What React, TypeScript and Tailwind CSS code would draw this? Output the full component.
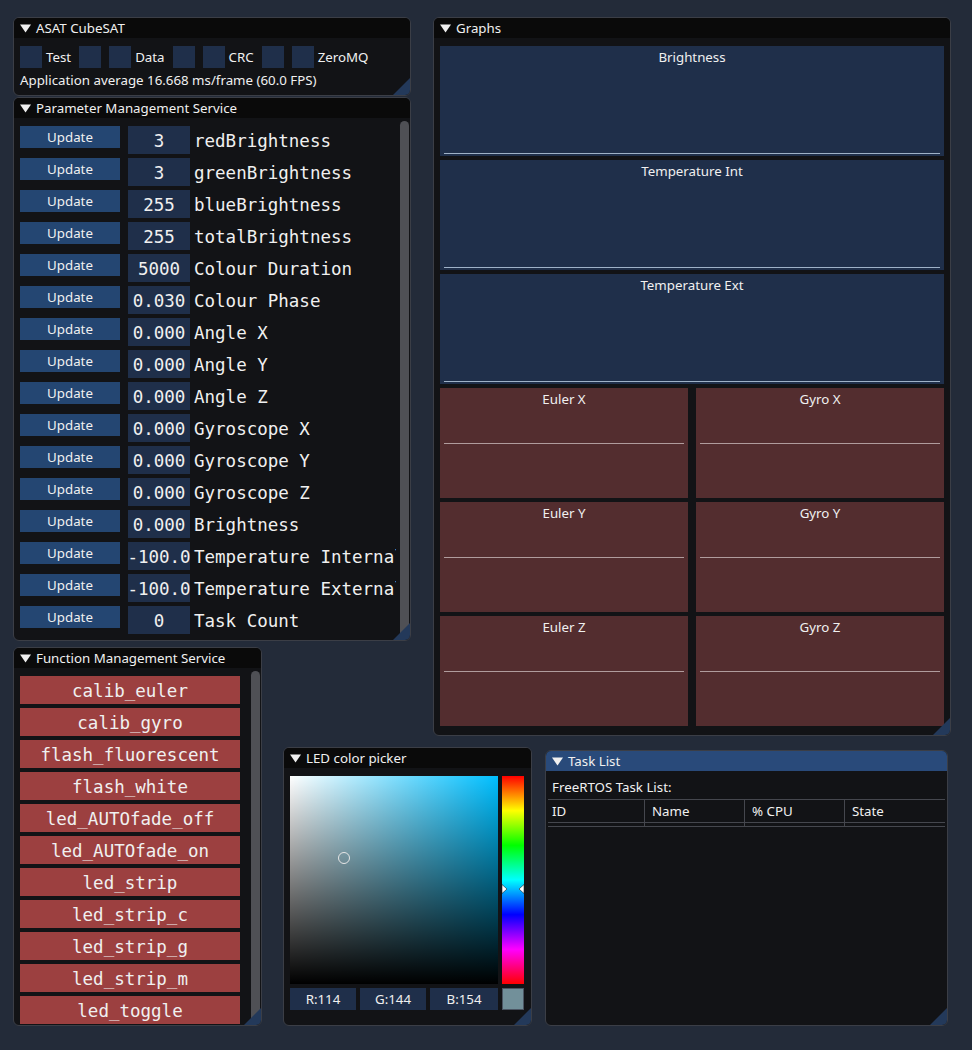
import type { ReactNode } from 'react';

// ─── Data ─────────────────────────────────────────────────────────────────────

const PARAMS: [string, string][] = [
  ['3', 'redBrightness'],
  ['3', 'greenBrightness'],
  ['255', 'blueBrightness'],
  ['255', 'totalBrightness'],
  ['5000', 'Colour Duration'],
  ['0.030', 'Colour Phase'],
  ['0.000', 'Angle X'],
  ['0.000', 'Angle Y'],
  ['0.000', 'Angle Z'],
  ['0.000', 'Gyroscope X'],
  ['0.000', 'Gyroscope Y'],
  ['0.000', 'Gyroscope Z'],
  ['0.000', 'Brightness'],
  ['-100.0', 'Temperature Internal'],
  ['-100.0', 'Temperature External'],
  ['0', 'Task Count'],
];

const FUNCTIONS = [
  'calib_euler',
  'calib_gyro',
  'flash_fluorescent',
  'flash_white',
  'led_AUTOfade_off',
  'led_AUTOfade_on',
  'led_strip',
  'led_strip_c',
  'led_strip_g',
  'led_strip_m',
  'led_toggle',
];

const MONO = "[font-family:'DejaVu_Sans_Mono',monospace] text-[17.5px] leading-[20px] pt-[2px]";

// ─── Window chrome ────────────────────────────────────────────────────────────

function Grip() {
  return (
    <div className="absolute right-0 bottom-0 h-[17px] w-[17px] bg-[#23395a] [clip-path:polygon(100%_0,100%_100%,0_100%)]" />
  );
}

function Window({
  title,
  className,
  active,
  children,
}: {
  title: string;
  className: string;
  active?: boolean;
  children: ReactNode;
}) {
  return (
    <div
      className={`absolute flex flex-col overflow-hidden rounded-[6px] border border-[#3b3e46] bg-[#121316] ${className}`}
    >
      <div
        className={`flex h-[20px] shrink-0 items-center gap-[5px] pl-[6px] ${active ? 'bg-[#294a7a]' : 'bg-[#0a0a0a]'}`}
      >
        <svg width="11" height="9" viewBox="0 0 11 9">
          <path d="M0 0.5h11L5.5 8.5z" fill="#f0f0f0" />
        </svg>
        <span className="-mt-px text-[13.3px] leading-[16px] text-[#f0f0f0]">{title}</span>
      </div>
      <div className="relative flex min-h-0 flex-1">{children}</div>
      <Grip />
    </div>
  );
}

function Scrollbar() {
  return (
    <div className="flex w-[14px] shrink-0 py-[3px] pl-[4px]">
      <div className="w-[9px] rounded-full bg-[#4f5055]" />
    </div>
  );
}

// ─── Windows ──────────────────────────────────────────────────────────────────

function Checkbox({ label }: { label?: string }) {
  return (
    <div className="flex items-center gap-[4px]">
      <div className="h-[22px] w-[22px] bg-[#1f2f4a]" />
      {label && <span className="text-[13.3px] leading-[16px]">{label}</span>}
    </div>
  );
}

function AsatWindow() {
  return (
    <Window title="ASAT CubeSAT" className="top-[17px] left-[13px] h-[79px] w-[398px]">
      <div className="flex flex-col px-[6px] pt-[8px]">
        <div className="flex items-center gap-[8px]">
          <Checkbox label="Test" />
          <Checkbox />
          <Checkbox label="Data" />
          <Checkbox />
          <Checkbox label="CRC" />
          <Checkbox />
          <Checkbox label="ZeroMQ" />
        </div>
        <div className="mt-[4px] text-[13.3px] leading-[16px]">Application average 16.668 ms/frame (60.0 FPS)</div>
      </div>
    </Window>
  );
}

function ParameterWindow() {
  return (
    <Window title="Parameter Management Service" className="top-[97px] left-[13px] h-[544px] w-[398px]">
      <div className="flex min-w-0 flex-1 flex-col gap-[4px] overflow-hidden pt-[8px] pl-[6px]">
        {PARAMS.map(([value, name]) => (
          <div key={name} className="flex h-[28px] shrink-0 items-start gap-[8px]">
            <div className="flex h-[22px] w-[100px] shrink-0 items-center justify-center bg-[#244672] text-[13.3px] leading-[16px]">
              Update
            </div>
            <div
              className={`flex h-[28px] w-[62px] shrink-0 items-center justify-center bg-[#1f2f4a] whitespace-nowrap ${MONO}`}
            >
              {value}
            </div>
            <div className={`-ml-[4px] flex h-[28px] items-center whitespace-nowrap ${MONO}`}>{name}</div>
          </div>
        ))}
      </div>
      <Scrollbar />
    </Window>
  );
}

function FunctionWindow() {
  return (
    <Window title="Function Management Service" className="top-[647px] left-[13px] h-[379px] w-[249px]">
      <div className="flex min-w-0 flex-1 flex-col gap-[4px] overflow-hidden pt-[8px] pl-[6px]">
        {FUNCTIONS.map(fn => (
          <div
            key={fn}
            className={`flex h-[28px] w-[220px] shrink-0 items-center justify-center bg-[#9c4040] ${MONO}`}
          >
            {fn}
          </div>
        ))}
      </div>
      <Scrollbar />
    </Window>
  );
}

function BluePlot({ title }: { title: string }) {
  return (
    <div className="relative flex h-[110px] w-[504px] justify-center bg-[#1f2f4a] pt-[3px] text-[13.3px] leading-[16px]">
      {title}
      <div className="absolute right-[4px] bottom-[2px] left-[4px] h-px bg-[#9fb2c8]" />
    </div>
  );
}

function RedPlot({ title }: { title: string }) {
  return (
    <div className="relative flex h-[110px] w-[248px] justify-center bg-[#532d2f] pt-[3px] text-[13.3px] leading-[16px]">
      {title}
      <div className="absolute top-[55px] right-[4px] left-[4px] h-px bg-[#b09c9d]" />
    </div>
  );
}

function GraphsWindow() {
  return (
    <Window title="Graphs" className="top-[17px] left-[433px] h-[719px] w-[518px]">
      <div className="flex flex-col gap-[4px] px-[6px] pt-[8px]">
        <BluePlot title="Brightness" />
        <BluePlot title="Temperature Int" />
        <BluePlot title="Temperature Ext" />
        {['X', 'Y', 'Z'].map(axis => (
          <div key={axis} className="flex gap-[8px]">
            <RedPlot title={`Euler ${axis}`} />
            <RedPlot title={`Gyro ${axis}`} />
          </div>
        ))}
      </div>
    </Window>
  );
}

function ColorPickerWindow() {
  return (
    <Window title="LED color picker" className="top-[747px] left-[283px] h-[279px] w-[249px]">
      <div className="flex flex-col gap-[4px] px-[6px] pt-[8px]">
        <div className="flex gap-[4px]">
          {/* saturation / value square */}
          <div className="relative h-[208px] w-[208px] bg-[#00bfff]">
            <div className="absolute inset-0 bg-[linear-gradient(to_right,#ffffff,rgba(255,255,255,0))]" />
            <div className="absolute inset-0 bg-[linear-gradient(to_bottom,rgba(0,0,0,0),#000000)]" />
            <div className="absolute top-[76px] left-[48px] h-[12px] w-[12px] rounded-full border-[1.5px] border-[#e6e6e6]" />
          </div>
          {/* hue bar */}
          <div className="relative h-[208px] w-[22px] bg-[linear-gradient(to_bottom,#ff0000,#ffff00,#00ff00,#00ffff,#0000ff,#ff00ff,#ff0000)]">
            <svg className="absolute inset-0" width="22" height="208" viewBox="0 0 22 208">
              <path d="M0 108.5L5 113L0 117.5z" fill="#ffffff" stroke="#000" strokeWidth="0.5" />
              <path d="M22 108.5L17 113L22 117.5z" fill="#ffffff" stroke="#000" strokeWidth="0.5" />
            </svg>
          </div>
        </div>
        <div className="flex h-[22px] gap-[4px] text-[13.3px] leading-[16px]">
          <div className="flex w-[66px] items-center justify-center bg-[#1f2f4a]">R:114</div>
          <div className="flex w-[66px] items-center justify-center bg-[#1f2f4a]">G:144</div>
          <div className="flex w-[68px] items-center justify-center bg-[#1f2f4a]">B:154</div>
          <div className="w-[22px] border border-[#4b5563] bg-[#72909a]" />
        </div>
      </div>
    </Window>
  );
}

function TaskListWindow() {
  const cols = [
    { label: 'ID', cls: 'w-[96px] pl-[4px]' },
    { label: 'Name', cls: 'w-[100px] border-l border-[#45474e] pl-[7px]' },
    { label: '% CPU', cls: 'w-[100px] border-l border-[#45474e] pl-[7px]' },
    { label: 'State', cls: 'flex-1 border-l border-[#45474e] pl-[7px]' },
  ];
  return (
    <Window title="Task List" active className="top-[750px] left-[545px] h-[276px] w-[403px]">
      <div className="flex flex-1 flex-col pt-[8px] text-[13.3px] leading-[16px]">
        <div className="pl-[6px]">FreeRTOS Task List:</div>
        <div className="mt-[4px] flex flex-col px-[2px]">
          <div className="flex h-[24px] border-y border-[#45474e]">
            {cols.map(c => (
              <div key={c.label} className={`flex items-center ${c.cls}`}>
                {c.label}
              </div>
            ))}
          </div>
          <div className="flex h-[4px] border-b border-[#45474e]">
            {cols.map(c => (
              <div key={c.label} className={c.cls} />
            ))}
          </div>
        </div>
      </div>
    </Window>
  );
}

// ─── App ──────────────────────────────────────────────────────────────────────

export default function App() {
  return (
    <div className="relative h-[1050px] w-[972px] overflow-hidden bg-[#232b39] text-[#f0f0f0] [font-family:'Noto_Sans',sans-serif]">
      <AsatWindow />
      <ParameterWindow />
      <FunctionWindow />
      <GraphsWindow />
      <ColorPickerWindow />
      <TaskListWindow />
    </div>
  );
}
